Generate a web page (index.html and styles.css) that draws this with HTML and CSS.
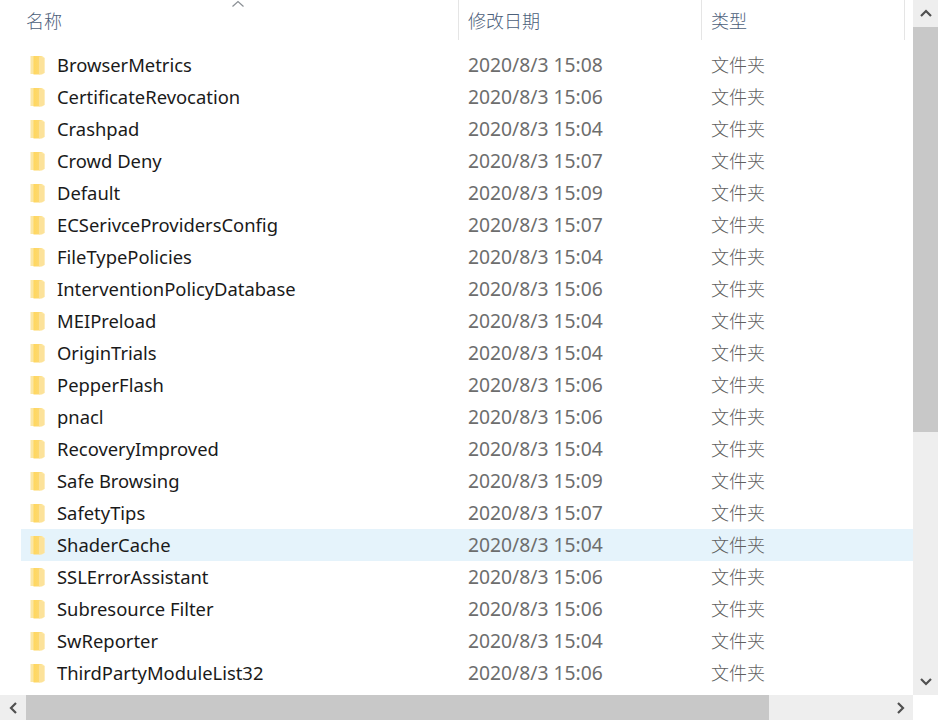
FILE: index.html
```html
<!DOCTYPE html>
<html lang="zh-CN">
<head>
<meta charset="utf-8">
<title>文件夹</title>
<link rel="stylesheet" href="styles.css">
</head>
<body>
<svg class="defs" width="0" height="0" aria-hidden="true">
  <defs>
    <linearGradient id="fg" x1="0" y1="0" x2="1" y2="0">
      <stop offset="0" stop-color="#ffd75e"/>
      <stop offset=".45" stop-color="#fdd86e"/>
      <stop offset="1" stop-color="#fff0bd"/>
    </linearGradient>
    <symbol id="folder" viewBox="0 0 15 20">
      <path d="M0.5 1h3.5l1 1.500V19H0.500z" fill="#fbe6a4"/>
      <path d="M3.500 1H12l2.500 1.500V18l-2.500 1.500H3.500z" fill="url(#fg)"/>
      <path d="M9 2l5.500 1v15L9 19.500z" fill="#fce29a"/>
    </symbol>
  </defs>
</svg>
<div class="window">
  <div class="content">
    <div class="pane">
      <div class="header">
        <div class="col col-name">名称
          <svg class="sort" width="14" height="7" viewBox="0 0 14 7"><path d="M1.500 6.500L7 1.500l5.500 5" fill="none" stroke="#8a8f94" stroke-width="1.200"/></svg>
        </div>
        <div class="col col-date">修改日期</div>
        <div class="col col-type">类型</div>
      </div>
      <div class="list">
        <div class="row"><div class="name"><svg class="icon"><use href="#folder"/></svg>BrowserMetrics</div><div class="date">2020/8/3 15:08</div><div class="type">文件夹</div></div>
        <div class="row"><div class="name"><svg class="icon"><use href="#folder"/></svg>CertificateRevocation</div><div class="date">2020/8/3 15:06</div><div class="type">文件夹</div></div>
        <div class="row"><div class="name"><svg class="icon"><use href="#folder"/></svg>Crashpad</div><div class="date">2020/8/3 15:04</div><div class="type">文件夹</div></div>
        <div class="row"><div class="name"><svg class="icon"><use href="#folder"/></svg>Crowd Deny</div><div class="date">2020/8/3 15:07</div><div class="type">文件夹</div></div>
        <div class="row"><div class="name"><svg class="icon"><use href="#folder"/></svg>Default</div><div class="date">2020/8/3 15:09</div><div class="type">文件夹</div></div>
        <div class="row"><div class="name"><svg class="icon"><use href="#folder"/></svg>ECSerivceProvidersConfig</div><div class="date">2020/8/3 15:07</div><div class="type">文件夹</div></div>
        <div class="row"><div class="name"><svg class="icon"><use href="#folder"/></svg>FileTypePolicies</div><div class="date">2020/8/3 15:04</div><div class="type">文件夹</div></div>
        <div class="row"><div class="name"><svg class="icon"><use href="#folder"/></svg>InterventionPolicyDatabase</div><div class="date">2020/8/3 15:06</div><div class="type">文件夹</div></div>
        <div class="row"><div class="name"><svg class="icon"><use href="#folder"/></svg>MEIPreload</div><div class="date">2020/8/3 15:04</div><div class="type">文件夹</div></div>
        <div class="row"><div class="name"><svg class="icon"><use href="#folder"/></svg>OriginTrials</div><div class="date">2020/8/3 15:04</div><div class="type">文件夹</div></div>
        <div class="row"><div class="name"><svg class="icon"><use href="#folder"/></svg>PepperFlash</div><div class="date">2020/8/3 15:06</div><div class="type">文件夹</div></div>
        <div class="row"><div class="name"><svg class="icon"><use href="#folder"/></svg>pnacl</div><div class="date">2020/8/3 15:06</div><div class="type">文件夹</div></div>
        <div class="row"><div class="name"><svg class="icon"><use href="#folder"/></svg>RecoveryImproved</div><div class="date">2020/8/3 15:04</div><div class="type">文件夹</div></div>
        <div class="row"><div class="name"><svg class="icon"><use href="#folder"/></svg>Safe Browsing</div><div class="date">2020/8/3 15:09</div><div class="type">文件夹</div></div>
        <div class="row"><div class="name"><svg class="icon"><use href="#folder"/></svg>SafetyTips</div><div class="date">2020/8/3 15:07</div><div class="type">文件夹</div></div>
        <div class="row selected"><div class="name"><svg class="icon"><use href="#folder"/></svg>ShaderCache</div><div class="date">2020/8/3 15:04</div><div class="type">文件夹</div></div>
        <div class="row"><div class="name"><svg class="icon"><use href="#folder"/></svg>SSLErrorAssistant</div><div class="date">2020/8/3 15:06</div><div class="type">文件夹</div></div>
        <div class="row"><div class="name"><svg class="icon"><use href="#folder"/></svg>Subresource Filter</div><div class="date">2020/8/3 15:06</div><div class="type">文件夹</div></div>
        <div class="row"><div class="name"><svg class="icon"><use href="#folder"/></svg>SwReporter</div><div class="date">2020/8/3 15:04</div><div class="type">文件夹</div></div>
        <div class="row"><div class="name"><svg class="icon"><use href="#folder"/></svg>ThirdPartyModuleList32</div><div class="date">2020/8/3 15:06</div><div class="type">文件夹</div></div>
      </div>
    </div>
    <div class="vscroll">
      <div class="sb-btn-v"><svg width="14" height="9" viewBox="0 0 14 9"><path d="M2 7l5-5 5 5" fill="none" stroke="#505050" stroke-width="2.200"/></svg></div>
      <div class="vthumb"></div>
      <div class="vtrack"></div>
      <div class="sb-btn-v"><svg width="14" height="9" viewBox="0 0 14 9"><path d="M2 2l5 5 5-5" fill="none" stroke="#505050" stroke-width="2.200"/></svg></div>
    </div>
  </div>
  <div class="hscroll">
    <div class="sb-btn-h"><svg width="9" height="14" viewBox="0 0 9 14"><path d="M7 2L2 7l5 5" fill="none" stroke="#505050" stroke-width="2.200"/></svg></div>
    <div class="hthumb"></div>
    <div class="htrack"></div>
    <div class="sb-btn-h"><svg width="9" height="14" viewBox="0 0 9 14"><path d="M2 2l5 5-5 5" fill="none" stroke="#505050" stroke-width="2.200"/></svg></div>
  </div>
</div>
</body>
</html>
```
FILE: styles.css
```css
* { box-sizing: border-box; }
html, body { margin: 0; height: 100%; overflow: hidden; background: #fff; }
body { font-family: "Noto Sans", "Noto Sans CJK SC", sans-serif; font-size: 18.4px; }
.defs { position: absolute; }
.window { display: flex; flex-direction: column; width: 938px; height: 720px; }
.content { display: flex; flex: 1; min-height: 0; }
.pane { flex: 1; min-width: 0; }
.header { display: flex; height: 40px; color: #4c607a; }
.col { position: relative; display: flex; align-items: center; font-family: "Noto Sans CJK SC", sans-serif; font-size: 18px; font-weight: 300; height: 40px; }
.col-name { width: 458px; padding-left: 26px; }
.col-date { width: 243px; padding-left: 9px; border-left: 1px solid #e5e5e5; }
.col-type { width: 204px; padding-left: 9px; border-left: 1px solid #e5e5e5; border-right: 1px solid #e5e5e5; }
.sort { position: absolute; left: 231px; top: 0; }
.list { padding: 9px 0 0 21px; }
.row { display: flex; align-items: center; height: 32px; }
.row.selected { background: #e5f3fb; }
.name { display: flex; align-items: center; width: 447px; padding: 0 0 2px 9px; color: #1a1a1a; }
.icon { width: 15px; height: 20px; margin: 2px 12px 0 0; flex: none; }
.date { width: 243px; color: #6d6d6d; font-size: 19.3px; padding-bottom: 2px; }
.type { color: #5f5f5f; font-family: "Noto Sans CJK SC", sans-serif; font-size: 18px; font-weight: 300; padding-bottom: 2px; }
.vscroll { width: 25px; display: flex; flex-direction: column; background: #eeeeee; }
.sb-btn-v { height: 27px; flex: none; display: flex; align-items: center; justify-content: center; }
.vthumb { height: 405px; flex: none; background: #c8c8c8; }
.vtrack { flex: 1; }
.hscroll { height: 25px; width: 913px; display: flex; background: #eeeeee; flex: none; }
.sb-btn-h { width: 26px; flex: none; display: flex; align-items: center; justify-content: center; }
.hthumb { width: 743px; flex: none; background: #c8c8c8; }
.htrack { flex: 1; }
```
